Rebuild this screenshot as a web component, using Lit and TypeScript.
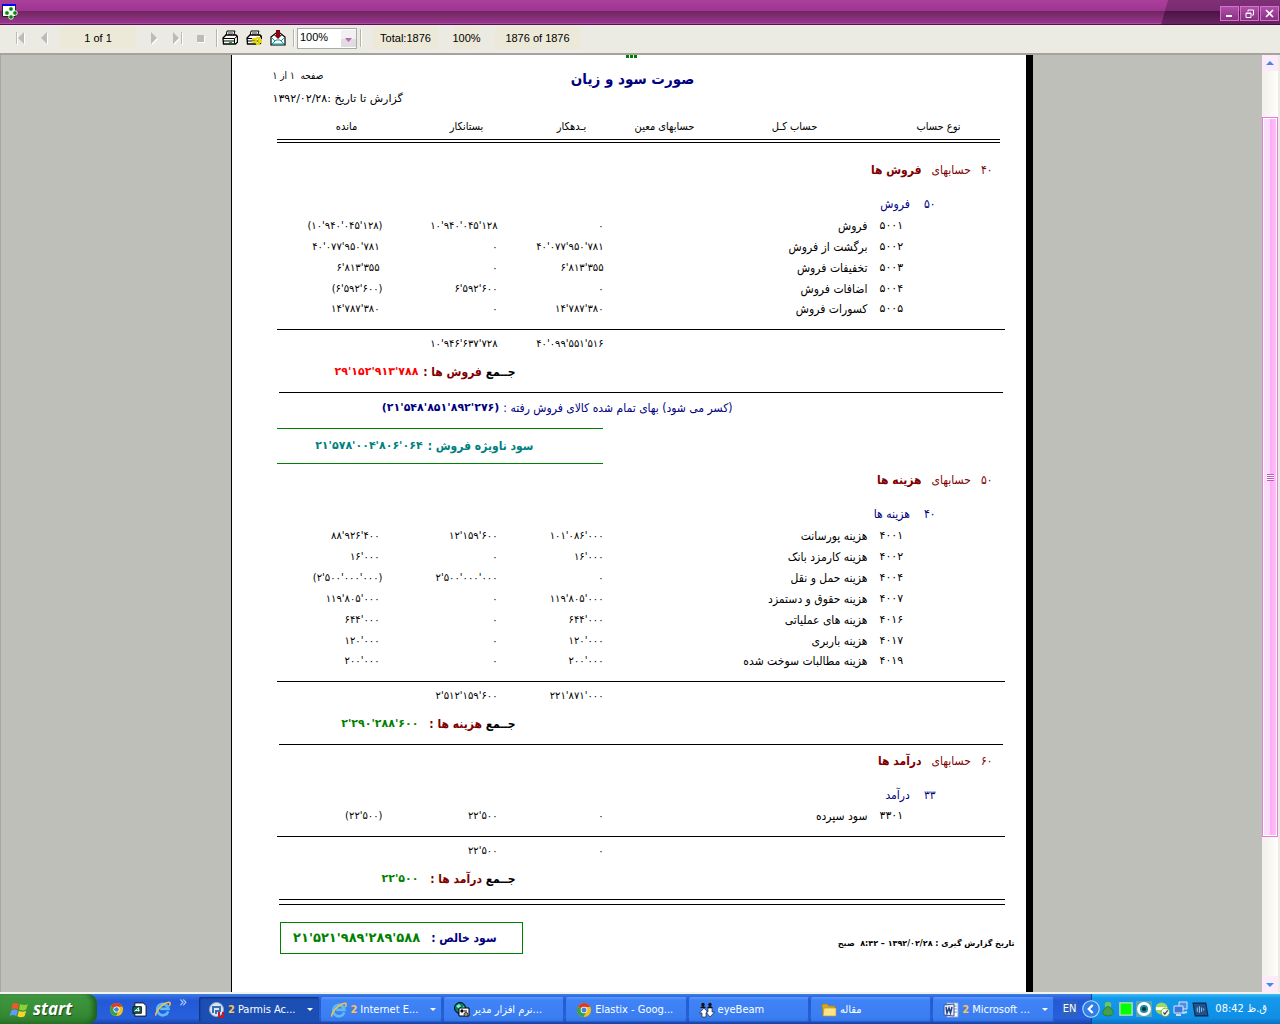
import { LitElement, html, css, svg, nothing } from "lit";
import { customElement } from "lit/decorators.js";
import { classMap } from "lit/directives/class-map.js";

interface Entry { code: string; name: string; debit: string; credit: string; balance: string; }
interface Section {
  code: string; title: string; groupCode: string; group: string; rows: Entry[];
  debit: string; credit: string; total: string; loss?: boolean;
}

const e = (code: string, name: string, debit: string, credit: string, balance: string): Entry => ({ code, name, debit, credit, balance });

const SALES: Section = {
  code: "۴۰", title: "فروش ها", groupCode: "۵۰", group: "فروش",
  rows: [
    e("۵۰۰۱", "فروش", "۰", "۱۰'۹۴۰'۰۴۵'۱۲۸", "(۱۰'۹۴۰'۰۴۵'۱۲۸)"),
    e("۵۰۰۲", "برگشت از فروش", "۴۰'۰۷۷'۹۵۰'۷۸۱", "۰", "۴۰'۰۷۷'۹۵۰'۷۸۱"),
    e("۵۰۰۳", "تخفیفات فروش", "۶'۸۱۳'۳۵۵", "۰", "۶'۸۱۳'۳۵۵"),
    e("۵۰۰۴", "اضافات فروش", "۰", "۶'۵۹۲'۶۰۰", "(۶'۵۹۲'۶۰۰)"),
    e("۵۰۰۵", "کسورات فروش", "۱۴'۷۸۷'۳۸۰", "۰", "۱۴'۷۸۷'۳۸۰"),
  ],
  debit: "۴۰'۰۹۹'۵۵۱'۵۱۶", credit: "۱۰'۹۴۶'۶۳۷'۷۲۸", total: "۲۹'۱۵۲'۹۱۳'۷۸۸", loss: true,
};

const COSTS: Section = {
  code: "۵۰", title: "هزینه ها", groupCode: "۴۰", group: "هزینه ها",
  rows: [
    e("۴۰۰۱", "هزینه پورسانت", "۱۰۱'۰۸۶'۰۰۰", "۱۲'۱۵۹'۶۰۰", "۸۸'۹۲۶'۴۰۰"),
    e("۴۰۰۲", "هزینه کارمزد بانک", "۱۶'۰۰۰", "۰", "۱۶'۰۰۰"),
    e("۴۰۰۴", "هزینه حمل و نقل", "۰", "۲'۵۰۰'۰۰۰'۰۰۰", "(۲'۵۰۰'۰۰۰'۰۰۰)"),
    e("۴۰۰۷", "هزینه حقوق و دستمزد", "۱۱۹'۸۰۵'۰۰۰", "۰", "۱۱۹'۸۰۵'۰۰۰"),
    e("۴۰۱۶", "هزینه های عملیاتی", "۶۴۴'۰۰۰", "۰", "۶۴۴'۰۰۰"),
    e("۴۰۱۷", "هزینه باربری", "۱۲۰'۰۰۰", "۰", "۱۲۰'۰۰۰"),
    e("۴۰۱۹", "هزینه مطالبات سوخت شده", "۲۰۰'۰۰۰", "۰", "۲۰۰'۰۰۰"),
  ],
  debit: "۲۲۱'۸۷۱'۰۰۰", credit: "۲'۵۱۲'۱۵۹'۶۰۰", total: "۲'۲۹۰'۲۸۸'۶۰۰",
};

const INCOME: Section = {
  code: "۶۰", title: "درآمد ها", groupCode: "۳۳", group: "درآمد",
  rows: [e("۳۳۰۱", "سود سپرده", "۰", "۲۲'۵۰۰", "(۲۲'۵۰۰)")],
  debit: "۰", credit: "۲۲'۵۰۰", total: "۲۲'۵۰۰",
};

const icon = (size: number, body: unknown) => html`<svg width=${size} height=${size} viewBox="0 0 16 16" aria-hidden="true">${body}</svg>`;

const chromeArt = svg`<circle cx="8" cy="8" r="7" fill="#f4c20d"/><path d="M8 8 1.9 4.5A7 7 0 0 1 14.3 5H8z" fill="#dd3b2a"/><path d="M1.9 4.5A7 7 0 0 0 7.5 15L10.6 9.6 8 8z" fill="#3a9e47"/><circle cx="8" cy="8" r="3.3" fill="#fff"/><circle cx="8" cy="8" r="2.5" fill="#3f84e5"/>`;
const ieArt = svg`<path d="M13.2 10.3A5.6 5.6 0 1 1 13.4 7.9H5.2" fill="none" stroke="#5fb9f5" stroke-width="2.8"/><path d="M1.2 14.6C-1 12 8 1.4 14 1.2 16 1.4 15 4 14 5" fill="none" stroke="#f3c544" stroke-width="1.5"/>`;
const wordArt = svg`<path d="M4 1h11v14H4z" fill="#fff" stroke="#8fa6d6"/><path d="M11 4h3M11 7h3M11 10h3" stroke="#7d93c9"/><path d="M1 3l10-1v12l-10-1z" fill="#e7edfa" stroke="#35579e"/><path d="M3 5l1 6 2-5 1.500 5L9 5" fill="none" stroke="#23417e" stroke-width="1.5"/>`;
const folderArt = svg`<path d="M1 4V3l1-1h4l2 2h6v9H2z" fill="#d9a520" stroke="#a97c14" stroke-width=".6"/><path d="M3 6h12v8H2z" fill="#ffe58a" stroke="#c2951f" stroke-width=".7"/>`;
const peopleArt = svg`<g fill="#fff" stroke="#111" stroke-width=".6"><path d="M5 6l4.500 5H7v4H3v-4H.500z"/><path d="M9 6h4v4h2.500l-4.500 5-4-5H9z"/></g><g fill="#111"><circle cx="4" cy="2.500" r="1.700"/><circle cx="11" cy="2.500" r="1.700"/><path d="M1 6q3-4 6 0zM8 6q3-4 6 0z"/></g>`;
const globeArt = svg`<circle cx="6" cy="6" r="5.500" fill="#0b7a6f" stroke="#000"/><path d="M2 4l3-2 2 2-2 3zM7 6l3-2 1 3-3 2z" fill="#7ff0b8"/><path d="M5 6h10v8H5z" fill="#fff" stroke="#000"/><path d="M7 8h2v2H7zM10 9h3" stroke="#000" fill="#000"/><circle cx="12" cy="12.500" r="2" fill="#b9962c" stroke="#2b2b60"/>`;
const parmisArt = svg`<circle cx="7.500" cy="7.500" r="7" fill="#dbe6f2" stroke="#8fa8c4"/><path d="M4 11V5h7v4H7v3" fill="none" stroke="#3970b5" stroke-width="2"/><path d="M10 10v5h4v-5" fill="none" stroke="#c3182b" stroke-width="2"/>`;
const docArt = svg`<path d="M3 1h9l3 3v11H3z" fill="#fff" stroke="#111"/><path d="M1 5h9v7H1z" fill="#0d6a5c" stroke="#111"/><path d="M3 10l4-4v4M3 9h5" stroke="#fff" fill="none"/>`;

const printerArt = svg`<path d="M4 6l1-5h8l-1.500 5" fill="#fff" stroke="#000"/><path d="M6 3h5M6 5h4" stroke="#000" stroke-width=".8"/><path d="M1 8l3-3h10l1.500 2v5l-2 2H1.500z" fill="#fff" stroke="#000" stroke-width="1.300"/><path d="M1 8.500h11.500v5M1 11h11M12.500 8.500l3-2.500" fill="none" stroke="#000"/><path d="M7 12h3v1H7z" fill="#0b0"/>`;

@customElement("xp-taskbar")
class XpTaskbar extends LitElement {
  static styles = css`
    :host { display: flex; height: 30px; flex: none; color: #fff; font: 11px/16px "DejaVu Sans Condensed", "DejaVu Sans", sans-serif;
      background: linear-gradient(#3f80e8 0, #2e68de 3px, #2459d5 7px, #2660dd 24px, #1941a5 30px); }
    button { font: inherit; color: inherit; border: 0; margin: 0; }
    .start { width: 97px; display: flex; align-items: center; gap: 4px; padding: 0 0 0 9px; border-radius: 0 9px 9px 0;
      background: linear-gradient(#5fae5f 0, #3d963d 4px, #358b35 20px, #2b7a2b 30px); box-shadow: inset -4px 0 5px #1d601f;
      font: italic bold 17px/20px "Open Sans", sans-serif; text-shadow: 1px 1px 1px #1b4a1b; }
    .quick { width: 102px; display: flex; align-items: center; gap: 8px; padding-left: 12px; box-sizing: border-box; }
    .quick button, .tray button { background: none; padding: 0; display: flex; }
    .more { color: #b9d3ff; font-size: 15px; align-self: flex-start; }
    .tasks { display: flex; flex: 1; gap: 2px; padding: 3px 0 2px; min-width: 0; }
    .task { flex: 1 1 0; max-width: 121px; min-width: 0; display: flex; align-items: center; gap: 3px; padding: 0 6px 0 10px; border-radius: 2px;
      background: linear-gradient(#5b9bff 0, #3f83f6 3px, #3a7ef2 20px, #3474e4); box-shadow: inset -1px -1px 0 #2660cc; }
    .task.active { background: #1c4fb3; box-shadow: inset 1px 1px 2px #0d2f78; }
    .count { color: #ffc258; font-weight: bold; }
    .label { flex: 1; text-align: left; white-space: nowrap; overflow: hidden; }
    .caret { border: 3px solid transparent; border-top-color: #fff; border-bottom: 0; flex: none; }
    svg { flex: none; }
    .lang { align-self: center; background: #2f62bd; padding: 0 1px; margin: 0 4px 0 8px; }
    .tray { display: flex; align-items: center; gap: 3px; padding: 0 13px 0 0;
      background: linear-gradient(#3fbcf5 0, #149aea 4px, #0f8ee6 24px, #0c6fc0 30px); margin-left: 10px; border-left: 1px solid #0a4a92; }
    .tray .expand { margin: 0 -3px 0 -10px; }
    .clock { margin-left: 3px; white-space: nowrap; }
  `;
  private task(art: unknown, label: string, count = "", menu = false, active = false) {
    return html`<button class=${classMap({ task: true, active })}>
      ${icon(16, art)}${count ? html`<span class="count">${count}</span>` : nothing}
      <span class="label" dir="ltr">${label}</span>${menu ? html`<span class="caret"></span>` : nothing}</button>`;
  }
  render() {
    return html`
      <button class="start">
        <svg width="20" height="20" viewBox="0 0 18 17" aria-hidden="true"><path d="M3 4q3-2 6 0L8 9q-3-2-6 0z" fill="#f0562b"/><path d="M10 4q4 2 7 0l-1.500 5q-3 2-6.500 0z" fill="#8bd137"/><path d="M2 10q3-2 6 0l-1.500 5q-3-2-6 0z" fill="#5c9df5"/><path d="M9 10q3 2 6.500 0L14 15q-3 2-6.500 0z" fill="#fdd22b"/></svg>
        start
      </button>
      <div class="quick">
        <button aria-label="Google Chrome">${icon(15, chromeArt)}</button>
        <button aria-label="Report">${icon(15, docArt)}</button>
        <button aria-label="Internet Explorer">${icon(16, ieArt)}</button>
        <button class="more">»</button>
      </div>
      <nav class="tasks">
        ${this.task(parmisArt, "Parmis Ac...", "2", true, true)}
        ${this.task(ieArt, "Internet E...", "2", true)}
        ${this.task(globeArt, "نرم افزار مدیر...")}
        ${this.task(chromeArt, "Elastix - Goog...")}
        ${this.task(peopleArt, "eyeBeam")}
        ${this.task(folderArt, "مقاله")}
        ${this.task(wordArt, "Microsoft ...", "2", true)}
      </nav>
      <span class="lang">EN</span>
      <div class="tray">
        <button class="expand" aria-label="Show hidden icons">${icon(18, svg`<circle cx="8" cy="8" r="7.300" fill="#2f7fe6" stroke="#bcdcff"/><path d="M9.500 4.500 6 8l3.500 3.500" fill="none" stroke="#fff" stroke-width="2"/>`)}</button>
        ${icon(16, svg`<circle cx="8" cy="4" r="3.300" fill="#6cc466"/><path d="M8 5q5 3 5.500 7-1 3-5.500 3t-5.500-3Q3 8 8 5z" fill="#45a048" stroke="#1f6a2c" stroke-width=".6"/>`)}
        ${icon(14, svg`<path d="M1 1h14v14H1z" fill="#0f0" stroke="#cfd8c0" stroke-width="1.500"/>`)}
        ${icon(16, svg`<path d="M0 0h16v16H0z" fill="#58a7b5"/><circle cx="8" cy="8" r="7" fill="#fff"/><circle cx="8" cy="8" r="4" fill="#1e88a0"/><circle cx="8" cy="8" r="2" fill="#063642"/>`)}
        ${icon(15, svg`<circle cx="7" cy="7" r="6.500" fill="#a3d95b"/><path d="M1 7h12" stroke="#fff" stroke-width="3"/><circle cx="11" cy="11" r="4.500" fill="#f4f7ef" stroke="#6da838"/><path d="m9 11 1.500 2 3-4" fill="none" stroke="#444" stroke-width="1.300"/>`)}
        ${icon(16, svg`<path d="M6 1h8v7H6z" fill="#4f8de6" stroke="#dbe9fb"/><path d="M1 5h9v7H1z" fill="#3d78d8" stroke="#dbe9fb"/><path d="M3 14h5M10 12l4-1" stroke="#cfd9e6" stroke-width="2"/>`)}
        ${icon(17, svg`<path d="M1 2h12l2 12H3z" fill="#21528c" stroke="#0c2746"/><path d="M5 6v4M7 5v6M9 6v4M11 7v2" stroke="#8fc0ee"/>`)}
        <span class="clock">08:42 ق.ظ</span>
      </div>`;
  }
}

@customElement("report-page")
class ReportPage extends LitElement {
  static styles = css`
    :host { display: block; box-sizing: border-box; width: 802px; max-width: 100%; min-height: 100%; direction: rtl; background: #fff; color: #000;
      border-left: 1px solid #000; border-right: 7px solid #000; padding: 0 21px 0 45px; font: 12px/16px "DejaVu Sans Condensed", "DejaVu Sans", sans-serif; }
    .handle { display: flex; justify-content: center; gap: 1px; height: 3px; padding-right: 18px; }
    .handle i { width: 3px; background: #008000; }
    .top { display: grid; grid-template-columns: 1fr auto 1fr; padding: 10px 0 0; height: 51px; box-sizing: border-box; }
    .title { grid-column: 2; margin: 0; font-size: 15px; line-height: 22px; font-weight: bold; color: #000080; padding-right: 16px; }
    .meta { margin: -4px 0 0 -4px; font-size: 10px; line-height: 23px; }
    .meta p { margin: 0; text-align: left; }
    .meta .asof { font-family: "DejaVu Sans", sans-serif; font-size: 11px; }
    .heads { display: grid; grid-template-columns: 132fr 156fr 104fr 82fr 128fr 112fr 14fr; font-size: 11px; text-align: center; height: 30px; box-sizing: border-box; padding-top: 10px; }
    .double { border-top: 1px solid #000; border-bottom: 1px solid #000; height: 2px; margin: 0 5px 11px 0; }
    .double.end { height: 4px; margin: 0 0 17px 2px; }
    .rule { height: 1px; background: #000; margin: 0 2px; }
    table { width: 100%; table-layout: fixed; border-collapse: collapse; }
    td, th { padding: 0; font-weight: normal; text-align: right; white-space: nowrap; }
    .c-code { width: 125px; } .c-debit { width: 106px; } .c-credit { width: 115px; } .c-balance { width: 106px; }
    .section { height: 32px; color: #800000; }
    .group { height: 29px; color: #000080; }
    .line { display: flex; }
    .section .line { padding-right: 12px; gap: 10px; }
    .group .line { padding: 6px 69px 0 0; gap: 14px; }
    .strong { font-weight: bold; }
    .entry { height: 21px; }
    .entry.last { height: 30px; }
    .last td { padding-bottom: 9px; }
    .entry .code { padding-right: 100px; font: 11px/16px "DejaVu Sans", sans-serif; }
    .code span { display: inline-block; direction: ltr; width: 25px; text-align: left; }
    .entry .name { padding-right: 12px; }
    .num { font: 10px/16px "DejaVu Sans", sans-serif; }
    .num span { direction: ltr; unicode-bidi: isolate; }
    .num.plain { padding-right: 3px; }
    .subtotal { border-top: 1px solid #000; height: 29px; }
    .sum { height: 34px; vertical-align: top; }
    .sum .line { padding: 6px 489px 0 0; gap: 5px; font-weight: bold; }
    .sum .caption { width: 92px; }
    .who { color: #800000; }
    .amount { direction: ltr; font: bold 11px/16px "DejaVu Sans", sans-serif; }
    .green { color: #008000; } .red { color: #f00; }
    .cost { display: flex; gap: 4px; padding: 7px 272px 0 0; height: 35px; box-sizing: border-box; color: #000080; white-space: nowrap; }
    .gross { display: flex; gap: 5px; align-items: center; width: 326px; height: 36px; box-sizing: border-box; margin-right: auto; padding-right: 69px;
      border-top: 1px solid #008000; border-bottom: 1px solid #008000; color: #008080; font-weight: bold; white-space: nowrap; }
    .foot { display: flex; justify-content: space-between; flex-direction: row-reverse; align-items: flex-end; margin: 0 -10px 0 3px; }
    .net { display: flex; gap: 11px; align-items: center; width: 243px; height: 32px; box-sizing: border-box; padding-right: 25px; border: 1px solid #008000; color: #000080; font-weight: bold; white-space: nowrap; }
    .net .amount { font-size: 13px; }
    .stamp { font: bold 8px/16px "DejaVu Sans", sans-serif; padding-bottom: 2px; }
  `;
  private num(value: string, kind: string) {
    return html`<td class=${classMap({ num: true, plain: kind === "balance" && !value.startsWith("(") })}><span>${value}</span></td>`;
  }
  private section(s: Section) {
    return html`<table>
      <colgroup><col class="c-code"><col><col class="c-debit"><col class="c-credit"><col class="c-balance"></colgroup>
      <thead>
        <tr class="section"><th colspan="5"><div class="line"><span>${s.code}</span><span>حسابهای</span><span class="strong">${s.title}</span></div></th></tr>
        <tr class="group"><th colspan="5"><div class="line"><span>${s.groupCode}</span><span>${s.group}</span></div></th></tr>
      </thead>
      <tbody>${s.rows.map((r, i) => html`<tr class=${classMap({ entry: true, last: i === s.rows.length - 1 })}>
        <td class="code"><span>${r.code}</span></td><td class="name">${r.name}</td>
        ${this.num(r.debit, "debit")}${this.num(r.credit, "credit")}${this.num(r.balance, "balance")}</tr>`)}</tbody>
      <tfoot>
        <tr class="subtotal"><td colspan="2"></td>${this.num(s.debit, "debit")}${this.num(s.credit, "credit")}<td></td></tr>
        <tr class="sum"><td colspan="5"><div class="line"><span class="caption">جــمع <span class="who">${s.title} :</span></span>
          <span class=${classMap({ amount: true, red: !!s.loss, green: !s.loss })}>${s.total}</span></div></td></tr>
      </tfoot>
    </table>`;
  }
  render() {
    return html`
      <div class="handle"><i></i><i></i><i></i></div>
      <header class="top">
        <h1 class="title">صورت سود و زیان</h1>
        <div class="meta"><p>صفحه &nbsp;۱ از ۱</p><p class="asof">گزارش تا تاریخ :۱۳۹۲/۰۲/۲۸</p></div>
      </header>
      <div class="heads"><span>نوع حساب</span><span>حساب کـل</span><span>حسابهای معین</span><span>بـدهکار</span><span>بستانکار</span><span>مانده</span></div>
      <div class="double"></div>
      ${this.section(SALES)}
      <div class="rule"></div>
      <div class="cost"><span>(کسر می شود) بهای تمام شده کالای فروش رفته :</span><span class="amount">(۲۱'۵۴۸'۸۵۱'۸۹۲'۲۷۶)</span></div>
      <div class="gross"><span>سود ناویژه فروش :</span><span class="amount">۲۱'۵۷۸'۰۰۴'۸۰۶'۰۶۴</span></div>
      ${this.section(COSTS)}
      <div class="rule"></div>
      ${this.section(INCOME)}
      <div class="double end"></div>
      <footer class="foot">
        <div class="net"><span>سود خالص :</span><span class="amount green">۲۱'۵۲۱'۹۸۹'۲۸۹'۵۸۸</span></div>
        <div class="stamp">تاریخ گزارش گیری : ۱۳۹۲/۰۲/۲۸ – ۸:۴۲ &nbsp;صبح</div>
      </footer>`;
  }
}

@customElement("app-root")
class AppRoot extends LitElement {
  static styles = css`
    :host { display: flex; flex-direction: column; min-height: 100vh; background: #ebebe4; font: 11px/16px "Liberation Sans", sans-serif; }
    button { border: 0; background: none; padding: 0; margin: 0; display: flex; }
    .titlebar { display: flex; align-items: center; justify-content: space-between; height: 25px; flex: none; box-sizing: border-box;
      background: linear-gradient(#ab409b 0, #9f3592 11px, #70255f 11px, #96368b 23px, #b04aa6 23px, #b04aa6 24px, #57134e 24px); padding-left: 2px; }
    .controls { display: flex; align-items: center; justify-content: flex-end; gap: 1px; width: 119px; height: 25px; box-sizing: border-box; padding: 1px 1px 0 0;
      background: linear-gradient(#7f3077 0, #7a2a70 11px, #4b1344 11px, #6a2563 24px, #430c3c 24px); clip-path: polygon(7px 0, 100% 0, 100% 100%, 0 100%); }
    .controls button { width: 19px; height: 15px; box-sizing: border-box; border: 1px solid #d374cc; background: linear-gradient(#b04fa8, #8a3084); align-items: center; justify-content: center; }
    .toolbar { display: flex; align-items: center; height: 28px; flex: none; box-sizing: border-box; padding: 0 0 2px 8px; color: #000; }
    .tool { width: 24px; height: 20px; align-items: center; justify-content: center; }
    .panel { background: #ece9d8; height: 22px; line-height: 22px; text-align: center; white-space: nowrap; }
    .count { width: 76px; margin: 0 8px 0 4px; }
    .sep { width: 1px; height: 18px; background: #b5b5ae; border-right: 1px solid #fff; }
    .tool + .sep.late { margin-left: 3px; }
    .zoom { display: flex; align-items: center; width: 60px; height: 21px; margin: 0 3px 0 2px; box-sizing: border-box; border: 1px solid #aaa; background: #fff; position: relative; }
    .zoom select { appearance: none; border: 0; background: none; width: 100%; height: 19px; padding: 0 0 2px 2px; font: inherit; }
    .zoom svg { position: absolute; right: 0; top: 1px; pointer-events: none; }
    .total { width: 65px; margin: 0 16px 0 11px; } .percent { width: 25px; display: flex; justify-content: center; } .range { width: 85px; margin-left: 16px; }
    .body { flex: 1; display: flex; border-top: 2px solid #a4a49c; border-bottom: 2px solid #f2f2ee; min-height: 0; }
    .canvas { flex: 1; display: flex; justify-content: center; background: #bfbfba; border-left: 1px solid #a8a8a0; box-sizing: border-box; min-width: 0; }
    .scroll { width: 16px; margin-right: 2px; display: flex; flex-direction: column; justify-content: space-between; background: linear-gradient(90deg, #f1f0ea, #fefefc); }
    .scroll button { height: 16px; align-items: center; justify-content: center; background: #fdeafb; }
    .thumb { flex: 0 0 720px; height: 720px; margin: 46px 0 auto; box-sizing: border-box; border: 1px solid #e87be0; box-shadow: inset 0 0 0 1px #fff;
      background: linear-gradient(90deg, #fbdcfa 50%, #fbabf5 50%, #fcc4f8); display: flex; align-items: center; justify-content: center; }
    .grip { width: 7px; height: 7px; background: repeating-linear-gradient(#c556bd 0 1px, #fff 1px 2px); }
  `;
  render() {
    const arrow = (d: string) => svg`<path d=${d} transform="translate(1 1)" fill="#fff"/><path d=${d} fill="#bcbcb6"/>`;
    const tool = (label: string, art: unknown) => html`<button class="tool" aria-label=${label}>${icon(16, art)}</button>`;
    return html`
      <div class="titlebar">
        <svg width="17" height="17" viewBox="0 0 17 17" aria-hidden="true"><path d="M.5 1.500h13v11H.5z" fill="#fff" stroke="#222"/><path d="M0 0h14v2H0z" fill="#00f"/><g fill="#080" stroke="#fff" stroke-width=".8"><circle cx="9" cy="5" r="2.300"/><circle cx="5" cy="9" r="2.300"/><circle cx="13" cy="9" r="2.300"/><circle cx="9" cy="13" r="2.300"/></g></svg>
        <div class="controls">
          <button aria-label="Minimize"><svg width="11" height="11" viewBox="0 0 11 11" aria-hidden="true"><path d="M2 7h6v2H2z" fill="#fff"/></svg></button>
          <button aria-label="Restore"><svg width="11" height="11" viewBox="0 0 11 11" aria-hidden="true"><path d="M4 3.500V2h5.500v5H8M2 5h5v4.500H2zM2 5.500h5" fill="none" stroke="#fff"/></svg></button>
          <button aria-label="Close"><svg width="11" height="11" viewBox="0 0 11 11" aria-hidden="true"><path d="m2 2 7 7M9 2 2 9" stroke="#fff" stroke-width="1.600"/></svg></button>
        </div>
      </div>
      <div class="toolbar">
        ${tool("First page", arrow("M4 2h1v12H4zM12 2v12L6 8z"))}
        ${tool("Previous page", arrow("M11 2v12L5 8z"))}
        <span class="panel count">1 of 1</span>
        ${tool("Next page", arrow("M3 2v12l6-6z"))}
        ${tool("Last page", arrow("M1 2v12l6-6zM9 2h1v12H9z"))}
        ${tool("Stop", arrow("M1 5h7v7H1z"))}
        <span class="sep"></span>
        ${tool("Print", printerArt)}
        ${tool("Printer setup", svg`${printerArt}<path d="M6 9h4l1-1h2v2h3M6 12h4l1 2h2v-2h3M10 9v4" stroke="#e8d800" stroke-width="1.800" fill="none"/>`)}
        ${tool("Export", svg`<path d="M1 7l5-4h4l5 4v8H1z" fill="#fff" stroke="#000" stroke-width="1.200"/><path d="m2 14 4-4h4l4 4zM2 8l3 3M14 8l-3 3" fill="#fff" stroke="#079aa5"/><path d="M6 0h4v5h2L8 9 4 5h2z" fill="#8c0010"/>`)}
        <span class="sep late"></span>
        <label class="zoom"><select aria-label="Zoom"><option>100%</option></select>
          <svg width="15" height="17" viewBox="0 0 15 17" aria-hidden="true"><path d="M0 0h15v17H0z" fill="#f2f0f2"/><path d="M0 9h15v8H0z" fill="#dfdde0"/><path d="M4 8h7l-3.500 4z" fill="#c064b8"/></svg></label>
        <span class="sep"></span>
        <span class="panel total">Total:1876</span><span class="panel percent">100%</span><span class="panel range">1876 of 1876</span>
      </div>
      <main class="body">
        <div class="canvas"><report-page></report-page></div>
        <div class="scroll">
          <button aria-label="Scroll up"><svg width="8" height="5" viewBox="0 0 8 5" aria-hidden="true"><path d="M4 0l4 4H0z" fill="#3b8bea"/></svg></button>
          <div class="thumb"><span class="grip"></span></div>
          <button aria-label="Scroll down"><svg width="8" height="5" viewBox="0 0 8 5" aria-hidden="true"><path d="M4 5 0 1h8z" fill="#3b8bea"/></svg></button>
        </div>
      </main>
      <xp-taskbar></xp-taskbar>`;
  }
}
